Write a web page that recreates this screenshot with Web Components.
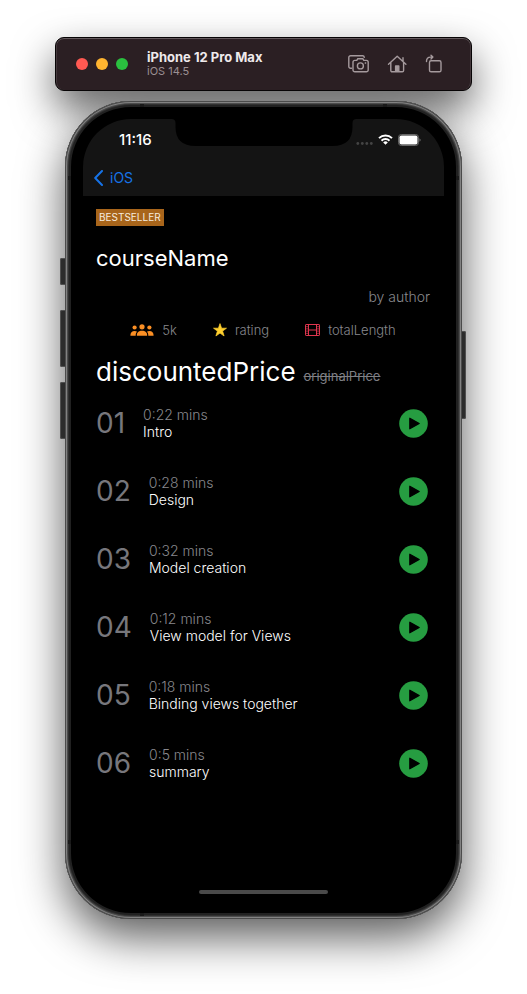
<!DOCTYPE html>
<html lang="en">
<head>
<meta charset="utf-8">
<meta name="viewport" content="width=device-width, initial-scale=1">
<title>iPhone 12 Pro Max</title>
<style>
  html { background: #fff; }
  body {
    margin: 0; padding: 37px 0 75px; box-sizing: border-box; min-height: 100vh;
    display: flex; flex-direction: column; gap: 10px; isolation: isolate;
    font-family: Inter, "Liberation Sans", sans-serif;
  }
</style>
</head>
<body>
<sim-toolbar><span slot="title">iPhone 12 Pro Max</span><span slot="subtitle">iOS 14.5</span></sim-toolbar>
<sim-phone>
  <phone-header time="11:16" back="iOS"></phone-header>
  <course-summary>
    <span slot="badge">BESTSELLER</span>
    <span slot="name">courseName</span>
    <span slot="author">by author</span>
    <course-stat slot="stats" icon="people">5k</course-stat>
    <course-stat slot="stats" icon="star">rating</course-stat>
    <course-stat slot="stats" icon="film">totalLength</course-stat>
    <span slot="price">discountedPrice</span>
    <span slot="original">originalPrice</span>
  </course-summary>
  <lesson-list>
    <lesson-row number="01" time="0:22 mins">Intro</lesson-row>
    <lesson-row number="02" time="0:28 mins">Design</lesson-row>
    <lesson-row number="03" time="0:32 mins">Model creation</lesson-row>
    <lesson-row number="04" time="0:12 mins">View model for Views</lesson-row>
    <lesson-row number="05" time="0:18 mins">Binding views together</lesson-row>
    <lesson-row number="06" time="0:5 mins">summary</lesson-row>
  </lesson-list>
</sim-phone>

<script>
class Base extends HTMLElement {
  connectedCallback() {
    if (!this.shadowRoot) this.attachShadow({ mode: 'open' }).innerHTML = this.render();
  }
}

customElements.define('sim-toolbar', class extends Base {
  render() {
    return `<style>
      :host { display: flex; align-items: center; position: relative; margin: 0 55px; height: 54px;
        box-sizing: border-box; padding: 0 29px 0 21px; }
      :host::before { content: ""; position: absolute; inset: 0; z-index: -1; border-radius: 9px;
        background: #2b1f23; border: 1px solid #070405; box-shadow: inset 0 1px 0 #63595c, inset 1px 0 0 #44383c, inset -1px 0 0 #44383c, 0 18px 40px rgba(0,0,0,.62); }
      button { all: unset; display: flex; cursor: pointer; }
      .lights { display: flex; gap: 8px; }
      .lights button { width: 12px; height: 12px; border-radius: 50%; background: var(--c); }
      .titles { flex: 1; padding-left: 19px; display: flex; flex-direction: column; }
      .t { font-size: 13px; line-height: 15px; font-weight: 700; color: #efeaec; }
      .s { font-size: 11px; line-height: 13px; color: #9b9093; }
      .tools { display: flex; align-items: center; gap: 18px; }
      svg { fill: none; stroke: #a59a9d; stroke-width: 1.4; stroke-linejoin: round; stroke-linecap: round; }
    </style>
    <div class="lights">
      <button aria-label="Close" style="--c:#ff5952"></button>
      <button aria-label="Minimize" style="--c:#ffb430"></button>
      <button aria-label="Zoom" style="--c:#2ac03f"></button>
    </div>
    <div class="titles"><slot class="t" name="title"></slot><slot class="s" name="subtitle"></slot></div>
    <div class="tools">
      <button aria-label="Screenshot"><svg width="22" height="20" viewBox="0 0 22 20">
        <path d="M4.500 14.200H3.600a1.800 1.800 0 0 1-1.800-1.800V3.600A1.800 1.800 0 0 1 3.600 1.800h12a1.800 1.800 0 0 1 1.700 1.500"/>
        <path d="M6 8.200A1.800 1.800 0 0 1 7.800 6.400h2l1-1.700h5l1 1.700h2.600a1.800 1.800 0 0 1 1.800 1.800v7.800a1.800 1.800 0 0 1-1.800 1.800H7.800A1.800 1.800 0 0 1 6 16z"/>
        <circle cx="13.400" cy="11.900" r="3"/><circle cx="18.300" cy="9" r=".5" fill="#a59a9d" stroke-width=".6"/></svg></button>
      <button aria-label="Home"><svg width="20" height="20" viewBox="0 0 20 20">
        <path d="M1.500 10.300 10.200 2.300l8.700 8M16 7.300V3.800M3.800 8.500v8a1.300 1.300 0 0 0 1.300 1.300h10.200a1.300 1.300 0 0 0 1.300-1.300v-8"/>
        <path d="M8.600 17v-5h3.200v5z" fill="#a59a9d"/></svg></button>
      <button aria-label="Rotate"><svg width="18" height="20" viewBox="0 0 18 20">
        <rect x="4.500" y="6.800" width="11.500" height="11" rx="1.600"/>
        <path d="M1.500 7.500C1.300 4.600 3 3.100 5.500 3.100H7.500M6 1.300l1.900 1.800L6 4.900"/></svg></button>
    </div>`;
  }
});

customElements.define('sim-phone', class extends Base {
  render() {
    return `<style>
      :host { display: flex; flex: 1; position: relative; margin: 0 65px; }
      .shadow { position: absolute; inset: 0; z-index: -2; border-radius: 66px; box-shadow: 0 18px 45px rgba(0,0,0,.65); }
      .key { position: absolute; z-index: -1; width: 8px; border-radius: 2px; background: #2c2c2c; box-shadow: inset 0 0 0 1px #505050; }
      .l { left: -5px; } .r { right: -4px; }
      .mark { position: absolute; background: #191919; }
      .mark.h { width: 4px; height: 3px; } .mark.v { width: 3px; height: 4px; }
      .frame { flex: 1; display: flex; box-sizing: border-box; padding: 18px; border-radius: 66px; background: #000;
        box-shadow: inset 0 0 0 1px #4b4b4b, inset 0 0 0 2px #828282, inset 0 0 0 3px #4c4c4c, inset 0 0 0 4px #303030, inset 0 0 0 6px #212121; }
      .screen { flex: 1; min-width: 0; display: flex; flex-direction: column; border-radius: 48px; overflow: hidden; background: #000; color: #fff; }
      .grow { flex: 1; }
      .home { align-self: center; width: 36%; height: 4px; margin-bottom: 7px; border-radius: 2px; background: #4a4a4a; }
    </style>
    <div class="shadow"></div>
    <div class="key l" style="top:157px;height:27px"></div>
    <div class="key l" style="top:209px;height:57px"></div>
    <div class="key l" style="top:281px;height:57px"></div>
    <div class="key r" style="top:230px;height:88px"></div>
    <div class="frame"><div class="screen"><slot></slot><div class="grow"></div><div class="home"></div></div></div>
    <div class="mark h" style="top:3px;left:75px"></div><div class="mark h" style="top:3px;right:75px"></div>
    <div class="mark h" style="bottom:3px;left:75px"></div>
    <div class="mark v" style="left:3px;top:75px"></div><div class="mark v" style="right:3px;top:75px"></div>
    <div class="mark v" style="left:3px;bottom:75px"></div><div class="mark v" style="right:3px;bottom:75px"></div>`;
  }
});

customElements.define('phone-header', class extends Base {
  render() {
    return `<style>
      :host { display: block; position: relative; background: #141414; }
      .notch { position: absolute; top: 0; left: 50%; transform: translateX(-50%); width: 185px; height: 27px; }
      .status { display: flex; justify-content: space-between; align-items: center; height: 41px; padding: 0 23px 0 36px; }
      time { font-size: 15px; line-height: 20px; font-weight: 500; }
      .icons { display: flex; align-items: center; gap: 5px; }
      nav { display: flex; height: 36px; padding-left: 11px; }
      a { display: flex; align-items: center; gap: 7px; height: 35px; color: #1673e8; font-size: 14px; line-height: 20px; text-decoration: none; }
    </style>
    <svg class="notch" viewBox="0 0 185 27"><path d="M0 0Q4 0 4 4V8Q4 27 24 27H161Q181 27 181 8V4Q181 0 185 0Z" fill="#000"/></svg>
    <div class="status"><time>${this.getAttribute('time')}</time>
      <div class="icons">
        <svg width="17" height="11" viewBox="0 0 17 11" fill="#444"><circle cx="1.800" cy="9.500" r="1.400"/><circle cx="6.300" cy="9.500" r="1.400"/><circle cx="10.800" cy="9.500" r="1.400"/><circle cx="15.300" cy="9.500" r="1.400"/></svg>
        <svg width="15" height="11" viewBox="0 0 15 11" fill="none" stroke="#fff" stroke-width="2"><path d="M1 4.100a9.300 9.300 0 0 1 13 0M3.500 6.700a5.700 5.700 0 0 1 8 0"/><path d="M5.200 8.400a3.300 3.300 0 0 1 4.600 0L7.500 10.700z" fill="#fff" stroke="none"/></svg>
        <svg width="23" height="12" viewBox="0 0 23 12"><rect x=".5" y=".5" width="20" height="11" rx="2.800" fill="none" stroke="#666"/><rect x="1.500" y="1.500" width="18" height="9" rx="1.800" fill="#fff"/><path d="M21.500 4.200c1.400.5 1.400 3 0 3.600z" fill="#777"/></svg>
      </div></div>
    <nav><a href="#"><svg width="9" height="16" viewBox="0 0 9 16" fill="none" stroke="currentColor" stroke-width="2" stroke-linecap="round" stroke-linejoin="round"><path d="M8 1 1.200 8 8 15"/></svg>${this.getAttribute('back')}</a></nav>`;
  }
});

customElements.define('course-summary', class extends Base {
  render() {
    return `<style>
      :host { display: flex; flex-direction: column; padding: 13px 14px 0 13px; }
      .badge { align-self: flex-start; padding: 0 3px; font-size: 10px; line-height: 17px; background: #a8651b; color: #f6ecdf; }
      h1 { margin: 16px 0 0; font-size: 22px; line-height: 32px; font-weight: 400; }
      .author { text-align: right; margin-top: 13px; font-size: 14px; line-height: 20px; font-weight: 300; color: #88888d; }
      .stats { display: flex; justify-content: center; gap: 36px; margin-top: 13px; }
      .price { display: flex; align-items: baseline; gap: 8px; margin-top: 15px; font-size: 26px; line-height: 34px; }
      s { font-size: 13px; line-height: 20px; color: #7f7f84; }
    </style>
    <div class="badge"><slot name="badge"></slot></div>
    <h1><slot name="name"></slot></h1>
    <div class="author"><slot name="author"></slot></div>
    <div class="stats"><slot name="stats"></slot></div>
    <div class="price"><slot name="price"></slot><s><slot name="original"></slot></s></div>`;
  }
});

const statIcons = {
  people: `<svg width="24" height="12" viewBox="0 0 24 12" fill="#fb8f24"><circle cx="12" cy="2.800" r="2.600"/><path d="M6.900 11.700c-.3-3.200 1.900-4.900 5.100-4.900s5.400 1.700 5.100 4.900z"/><circle cx="4.600" cy="3.500" r="2.100"/><circle cx="19.400" cy="3.500" r="2.100"/><path d="M.4 11.700C.2 8.800 2 7.100 4.600 7.100c.9 0 1.800.2 2.500.6C6 8.700 5.600 10 5.700 11.700zM23.600 11.700c.2-2.900-1.600-4.600-4.200-4.600-.9 0-1.800.2-2.500.6 1.100 1 1.500 2.300 1.400 4z"/></svg>`,
  star: `<svg width="14" height="14" viewBox="0 0 14 14" fill="#ffd02e" stroke="#ffd02e" stroke-width=".7" stroke-linejoin="round"><path d="m7 .6 1.600 4.600h4.900L9.600 8.100l1.500 4.900L7 10.100 2.900 13l1.500-4.900L.5 5.200h4.900z"/></svg>`,
  film: `<svg width="15" height="12" viewBox="0 0 15 12" fill="none" stroke="#e0364f"><rect x=".5" y=".5" width="14" height="11" rx=".6"/><path d="M3.500.5v11M11.500.5v11M3.500 6h8"/><path stroke-width=".7" d="M.5 2.700h3M.5 4.900h3M.5 7.100h3M.5 9.300h3M11.500 2.700h3M11.500 4.900h3M11.500 7.100h3M11.500 9.300h3"/></svg>`
};
customElements.define('course-stat', class extends Base {
  render() {
    return `<style>
      :host { display: flex; align-items: center; gap: 8px; font-size: 13px; line-height: 20px; font-weight: 300; color: #88888d; }
    </style>${statIcons[this.getAttribute('icon')]}<span><slot></slot></span>`;
  }
});

customElements.define('lesson-list', class extends Base {
  render() {
    return `<style>:host { display: flex; flex-direction: column; }</style><slot></slot>`;
  }
  connectedCallback() { super.connectedCallback(); this.setAttribute('role', 'list'); }
});

customElements.define('lesson-row', class extends Base {
  connectedCallback() { super.connectedCallback(); this.setAttribute('role', 'listitem'); }
  render() {
    const n = this.getAttribute('number');
    return `<style>
      :host { display: flex; align-items: center; gap: 18px; height: 68px; padding: 0 16px 0 13px; }
      .n { font-size: 28px; line-height: 34px; color: #77777c; }
      .text { flex: 1; display: flex; flex-direction: column; font-size: 14px; line-height: 17px; font-weight: 300; }
      .time { color: #88888d; }
      button { all: unset; display: flex; cursor: pointer; }
    </style>
    <span class="n">${n}</span>
    <div class="text"><span class="time">${this.getAttribute('time')}</span><slot></slot></div>
    <button aria-label="Play lesson ${n}"><svg width="29" height="29" viewBox="0 0 29 29"><circle cx="14.500" cy="14.500" r="14.300" fill="#269d41"/><path d="M10.800 9.200v10.600L20.200 14.500z" fill="#000" stroke="#000" stroke-width="1.200" stroke-linejoin="round"/></svg></button>`;
  }
});
</script>
</body>
</html>
